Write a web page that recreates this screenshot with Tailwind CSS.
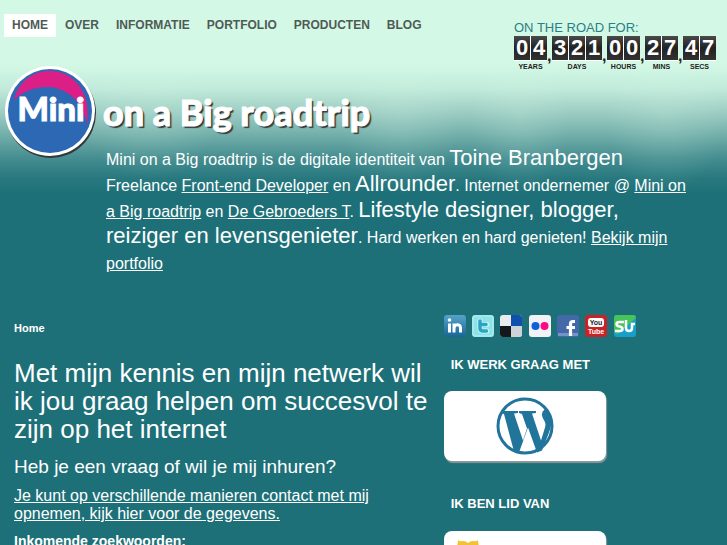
<!DOCTYPE html>
<html lang="nl">
  <head>
    <meta charset="UTF-8" />
    <meta name="viewport" content="width=device-width, initial-scale=1.0" />
    <title>Mini on a Big roadtrip</title>
    <!-- Tailwind CSS CDN -->
    <script src="https://cdn.jsdelivr.net/npm/@tailwindcss/browser@4"></script>
  </head>
  <body class="bg-[#1e7078] font-['Liberation_Sans',sans-serif] text-white">
    <div class="min-h-screen bg-[radial-gradient(ellipse_70px_70px_at_150px_110px,#d3f8e530,transparent),radial-gradient(ellipse_60px_80px_at_400px_115px,#d3f8e530,transparent),radial-gradient(ellipse_50px_80px_at_520px_115px,#d3f8e530,transparent),radial-gradient(ellipse_60px_80px_at_665px_115px,#d3f8e530,transparent),linear-gradient(to_bottom,#d3f8e5_0px,#d3f8e5_64px,#c2ebdb_88px,#9dcdc3_112px,#74b0ab_134px,#458d90_158px,#28797f_178px,#1e7078_194px)] bg-no-repeat">
      <!-- Menu and counter -->
      <header class="flex items-start justify-between pl-1 pr-[11px] pt-[14px]">
        <nav>
          <ul class="flex gap-px text-[12px] font-bold leading-[23px] text-[#4f5a55]">
            <li><a href="#" class="block bg-white px-2">HOME</a></li>
            <li><a href="#" class="block px-2">OVER</a></li>
            <li><a href="#" class="block px-2">INFORMATIE</a></li>
            <li><a href="#" class="block px-2">PORTFOLIO</a></li>
            <li><a href="#" class="block px-2">PRODUCTEN</a></li>
            <li><a href="#" class="block px-2">BLOG</a></li>
          </ul>
        </nav>
        <div class="pt-[5px]">
          <p class="text-[13px] leading-[17px] text-[#2a7f86]">ON THE ROAD FOR:</p>
          <div id="counter" class="flex"></div>
        </div>
      </header>

      <!-- Logo -->
      <h1 class="-mt-[6px] flex items-center gap-[5px] pl-1">
        <svg class="h-[94px] w-[94px]" viewBox="0 0 94 94" aria-label="Mini">
          <circle cx="47" cy="48" r="45" fill="#33393a" />
          <circle cx="46" cy="46" r="45" fill="#fff" />
          <circle cx="46" cy="46" r="42" fill="#2c68b4" />
          <path d="M10 35C15 16 29 6 46 6c23 0 42 21 37 53C79 35 61 22 43 22c-14 0-24 5-33 13z" fill="#dc1e87" />
          <text x="47" y="56" text-anchor="middle" font-family="Lato" font-weight="900" font-size="33" fill="#fff" stroke="#fff">Mini</text>
        </svg>
        <span class="font-['Lato',sans-serif] text-[36px] font-black leading-[36px] [-webkit-text-stroke:1px_white] [text-shadow:2px_2px_1px_#33393a]">on a Big roadtrip</span>
      </h1>

      <!-- Intro -->
      <p class="-mt-[12px] ml-[106px] mr-10 text-[16px] leading-[26px]">
        Mini on a Big roadtrip is de digitale identiteit van <span class="text-[22px] leading-[22px]">Toine Branbergen</span>
        Freelance <a href="#" class="underline">Front-end Developer</a> en <span class="text-[22px] leading-[22px]">Allrounder</span>.
        Internet ondernemer @ <a href="#" class="underline">Mini on a Big roadtrip</a> en
        <a href="#" class="underline">De Gebroeders T</a>.
        <span class="text-[22px] leading-[22px]">Lifestyle designer, blogger, reiziger en levensgenieter</span>.
        Hard werken en hard genieten! <a href="#" class="underline">Bekijk mijn portfolio</a>
      </p>

      <div class="flex pl-[14px] pt-[38px]">
        <!-- Content -->
        <main class="w-[59%]">
          <p class="pt-[6px] text-[11px] font-bold leading-[14px]">Home</p>
          <h2 class="mt-6 text-[26px] leading-[28px]">Met mijn kennis en mijn netwerk wil ik jou graag helpen om succesvol te zijn op het internet</h2>
          <h3 class="mt-3 text-[19px] leading-[24px]">Heb je een vraag of wil je mij inhuren?</h3>
          <p class="mt-2 pr-10 text-[16px] leading-[18px]"><a href="#" class="underline">Je kunt op verschillende manieren contact met mij opnemen, kijk hier voor de gegevens.</a></p>
          <p class="mt-[9px] text-[14px] font-bold leading-[18px]">Inkomende zoekwoorden:</p>
        </main>

        <!-- Sidebar -->
        <aside class="ml-[9px] w-[192px]">
          <div class="flex justify-between">
            <a href="#" aria-label="LinkedIn">
              <svg class="h-[22px] w-[22px]" viewBox="0 0 22 22">
                <defs><linearGradient id="li" x2="0" y2="1"><stop stop-color="#56a3c9" /><stop offset="1" stop-color="#186596" /></linearGradient></defs>
                <rect width="22" height="22" rx="3" fill="url(#li)" />
                <path d="M5.500 8.500v9M10 17.500v-9m0 5c0-5 6.500-5 6.500-.5v4.500" fill="none" stroke="#fff" stroke-width="3" />
                <circle cx="5.500" cy="5" r="1.800" fill="#fff" />
              </svg>
            </a>
            <a href="#" aria-label="Twitter">
              <svg class="h-[22px] w-[22px]" viewBox="0 0 22 22">
                <rect width="22" height="22" rx="3" fill="#8fe3e8" />
                <rect x="1" y="1" width="20" height="20" rx="2" fill="none" stroke="#b6f0f2" />
                <path d="M8 6v7q0 3 3 3h4M8 9.500h7" fill="none" stroke="#c9f6f7" stroke-width="5" stroke-linecap="round" />
                <path d="M8 6v7q0 3 3 3h3.500M8 9.500h6" fill="none" stroke="#2aa5c4" stroke-width="3.500" stroke-linecap="round" />
              </svg>
            </a>
            <a href="#" aria-label="Delicious">
              <svg class="h-[22px] w-[22px]" viewBox="0 0 22 22">
                <rect width="22" height="22" rx="3" fill="#e9ebee" />
                <path d="M11 0h8q3 0 3 3v8H11z" fill="#0f4fae" />
                <path d="M0 11h11v11H3q-3 0-3-3z" fill="#15181a" />
                <path d="M11 11h11v8q0 3-3 3h-8z" fill="#cfd3d8" />
              </svg>
            </a>
            <a href="#" aria-label="Flickr">
              <svg class="h-[22px] w-[22px]" viewBox="0 0 22 22">
                <rect width="22" height="22" rx="3" fill="#f1f2f5" />
                <circle cx="6.500" cy="11" r="4" fill="#0b62d8" />
                <circle cx="15.500" cy="11" r="4" fill="#fb0a84" />
              </svg>
            </a>
            <a href="#" aria-label="Facebook">
              <svg class="h-[22px] w-[22px]" viewBox="0 0 22 22">
                <rect width="22" height="22" rx="3" fill="#4469a8" />
                <rect x="1" y="18" width="20" height="3" fill="#7593c4" />
                <path d="M18 6.500h-2q-2.500 0-2.500 2.500v12M9.500 12.500H18" fill="none" stroke="#fff" stroke-width="3.200" />
              </svg>
            </a>
            <a href="#" aria-label="YouTube">
              <svg class="h-[22px] w-[22px]" viewBox="0 0 22 22">
                <rect width="22" height="22" rx="3" fill="#cb2226" />
                <rect x="3" y="3" width="16" height="9" rx="3" fill="#fff" />
                <text x="11" y="10" text-anchor="middle" font-family="Liberation Sans" font-weight="700" font-size="7" fill="#222">You</text>
                <text x="11" y="19" text-anchor="middle" font-family="Liberation Sans" font-weight="700" font-size="7" fill="#fff">Tube</text>
              </svg>
            </a>
            <a href="#" aria-label="StumbleUpon">
              <svg class="h-[22px] w-[22px]" viewBox="0 0 22 22">
                <rect width="22" height="22" rx="3" fill="#16a0c9" />
                <path d="M3 0h16q3 0 3 3L4 19 0 17V3q0-3 3-3z" fill="#46c35b" />
                <path d="M10 7H5.500Q2.500 7 2.500 9T5.500 11.500 8.500 14 5.500 16H1M12 5v8q0 3 3 3t3-3V9h3" fill="none" stroke="#fff" stroke-width="2.500" />
              </svg>
            </a>
          </div>

          <h4 class="mt-[19px] pl-[7px] text-[13px] font-bold leading-[18px]">IK WERK GRAAG MET</h4>
          <div class="mr-[30px] mt-[17px] flex h-[70px] items-center justify-center rounded-lg bg-white shadow-[1px_2px_1px_#8a9a9c]">
            <svg class="h-[58px] w-[58px]" viewBox="0 0 58 58" aria-label="WordPress">
              <circle cx="29" cy="29" r="27" fill="#fff" stroke="#21759b" stroke-width="3" />
              <path d="M5 14h17v2l-4 .5 9 27 4-12-5-14.500-3-1v-2h17v2l-4 .5 9 27 4-13c2-6-3-8-3-13 0-4 3-6 6-5l3 6c1 6 0 12-2 17l-7 18-5 2-9-25-9 25-5-1L8 17l-3-1z" fill="#21759b" />
            </svg>
          </div>

          <h4 class="mt-[34px] pl-[7px] text-[13px] font-bold leading-[18px]">IK BEN LID VAN</h4>
          <div class="mr-[30px] mt-[18px] h-[70px] rounded-lg bg-white pl-3 pt-2 shadow-[1px_2px_1px_#8a9a9c]">
            <svg class="h-[50px] w-[24px]" viewBox="0 0 24 50" aria-hidden="true">
              <path d="M2 1q2 2 5 1 3 0 5 2 2-2 5-2 3 1 5-1 0 3 1 6 2 6 0 12v16q-10 14-22 0V19Q-1 13 1 7q1-3 1-6z" fill="#f2c230" />
              <circle cx="7" cy="13" r="4" fill="#fff" />
              <circle cx="17" cy="13" r="4" fill="#fff" />
            </svg>
          </div>
        </aside>
      </div>
    </div>

    <script>
      const units = [['04', 'YEARS'], ['321', 'DAYS'], ['00', 'HOURS'], ['27', 'MINS'], ['47', 'SECS']];

      // Flip counter: one dark tile per digit, a comma between the groups
      document.getElementById('counter').innerHTML = units.map(([value, label], i) => `
        <div class="text-center">
          <div class="flex gap-px bg-white pb-px">
            ${[...value].map(d => `<span class="w-4 bg-linear-to-b from-[#4a4a4a] via-[#222] to-[#333] text-[22px] font-bold leading-[24px]">${d}</span>`).join('')}
          </div>
          <p class="pt-px text-[7px] font-bold leading-[9px] text-[#222]">${label}</p>
        </div>
        ${i < units.length - 1 ? '<span class="w-[5px] pt-[12px] text-[16px] font-bold leading-[16px] text-[#222]">,</span>' : ''}`).join('');
    </script>
  </body>
</html>
